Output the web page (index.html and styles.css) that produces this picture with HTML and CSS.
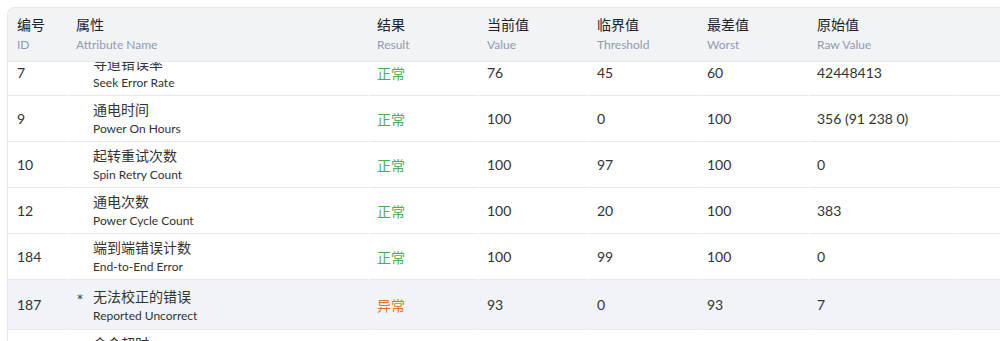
FILE: index.html
```html
<!DOCTYPE html>
<html lang="zh-CN">
<head>
<meta charset="utf-8">
<title>SMART</title>
<link rel="stylesheet" href="styles.css">
</head>
<body>
<div class="page">
  <div class="card">
    <div class="thead">
      <div class="row head-row">
        <div class="cell c-id"><div class="h-zh">编号</div><div class="h-en">ID</div></div>
        <div class="cell"><div class="h-zh">属性</div><div class="h-en">Attribute Name</div></div>
        <div class="cell"><div class="h-zh">结果</div><div class="h-en">Result</div></div>
        <div class="cell"><div class="h-zh">当前值</div><div class="h-en">Value</div></div>
        <div class="cell"><div class="h-zh">临界值</div><div class="h-en">Threshold</div></div>
        <div class="cell"><div class="h-zh">最差值</div><div class="h-en">Worst</div></div>
        <div class="cell"><div class="h-zh">原始值</div><div class="h-en">Raw Value</div></div>
        <div class="cell"></div>
      </div>
    </div>
    <div class="tbody-wrap">
      <div class="tbody">
        <div class="row body-row">
          <div class="cell c-id">7</div>
          <div class="cell attr"><span class="mark"></span><div class="names"><div class="zh">寻道错误率</div><div class="en">Seek Error Rate</div></div></div>
          <div class="cell ok">正常</div>
          <div class="cell">76</div><div class="cell">45</div><div class="cell">60</div><div class="cell">42448413</div><div class="cell"></div>
        </div>
        <div class="row body-row">
          <div class="cell c-id">9</div>
          <div class="cell attr"><span class="mark"></span><div class="names"><div class="zh">通电时间</div><div class="en">Power On Hours</div></div></div>
          <div class="cell ok">正常</div>
          <div class="cell">100</div><div class="cell">0</div><div class="cell">100</div><div class="cell">356 (91 238 0)</div><div class="cell"></div>
        </div>
        <div class="row body-row">
          <div class="cell c-id">10</div>
          <div class="cell attr"><span class="mark"></span><div class="names"><div class="zh">起转重试次数</div><div class="en">Spin Retry Count</div></div></div>
          <div class="cell ok">正常</div>
          <div class="cell">100</div><div class="cell">97</div><div class="cell">100</div><div class="cell">0</div><div class="cell"></div>
        </div>
        <div class="row body-row">
          <div class="cell c-id">12</div>
          <div class="cell attr"><span class="mark"></span><div class="names"><div class="zh">通电次数</div><div class="en">Power Cycle Count</div></div></div>
          <div class="cell ok">正常</div>
          <div class="cell">100</div><div class="cell">20</div><div class="cell">100</div><div class="cell">383</div><div class="cell"></div>
        </div>
        <div class="row body-row">
          <div class="cell c-id">184</div>
          <div class="cell attr"><span class="mark"></span><div class="names"><div class="zh">端到端错误计数</div><div class="en">End-to-End Error</div></div></div>
          <div class="cell ok">正常</div>
          <div class="cell">100</div><div class="cell">99</div><div class="cell">100</div><div class="cell">0</div><div class="cell"></div>
        </div>
        <div class="row body-row warn-row">
          <div class="cell c-id">187</div>
          <div class="cell attr"><span class="mark">*</span><div class="names"><div class="zh">无法校正的错误</div><div class="en">Reported Uncorrect</div></div></div>
          <div class="cell bad">异常</div>
          <div class="cell">93</div><div class="cell">0</div><div class="cell">93</div><div class="cell">7</div><div class="cell"></div>
        </div>
        <div class="row body-row">
          <div class="cell c-id">188</div>
          <div class="cell attr"><span class="mark"></span><div class="names"><div class="zh">命令超时</div><div class="en">Command Timeout</div></div></div>
          <div class="cell ok">正常</div>
          <div class="cell">100</div><div class="cell">0</div><div class="cell">100</div><div class="cell">0</div><div class="cell"></div>
        </div>
      </div>
    </div>
  </div>
</div>
</body>
</html>
```

FILE: styles.css
```css
html, body {
  margin: 0;
  padding: 0;
  background: #ffffff;
  overflow: hidden;
}
body {
  font-family: "Lato", "Noto Sans CJK SC", sans-serif;
  color: #333333;
  font-size: 14px;
}
.page {
  padding: 7px 0 0 7px;
  width: 1100px;
}
.card {
  border-top: 1px solid #e4e7ec;
  border-left: 1px solid #e4e7ec;
  border-radius: 8px 0 0 0;
  overflow: hidden;
  height: 400px;
  display: flex;
  flex-direction: column;
}
.row {
  display: grid;
  grid-template-columns: 59px 300px 109px 109px 109px 109px 148px 1fr;
  column-gap: 1px;
}
.thead {
  background: #f2f3f5;
  border-bottom: 1px solid #e4e7ec;
  position: relative;
  z-index: 1;
}
.head-row .cell {
  padding: 7px 0 7px 8px;
}
.head-row .c-id {
  padding-left: 9px;
}
.h-zh {
  font-size: 14px;
  line-height: 20px;
  color: #1d2129;
}
.h-en {
  font-size: 12px;
  line-height: 19px;
  color: #8d9bb3;
}
.tbody-wrap {
  overflow: hidden;
  flex: 1;
}
.tbody {
  margin-top: -12px;
}
.body-row .cell {
  border-bottom: 1px solid #e6e8ec;
  padding: 0 0 0 8px;
  display: flex;
  align-items: center;
  min-height: 45px;
}
.body-row .c-id {
  padding-left: 9px;
}
.attr .names {
  padding: 4px 0 2px;
}
.mark {
  width: 17px;
  flex: none;
  align-self: flex-start;
  padding: 10px 0 0 1px;
  box-sizing: border-box;
  color: #444;
  font-family: "DejaVu Sans", sans-serif;
  font-size: 12px;
  line-height: 19px;
}
.zh {
  font-size: 14px;
  line-height: 19px;
  color: #333;
}
.en {
  font-size: 12px;
  line-height: 20px;
  color: #333;
}
.ok {
  color: #4caf50;
}
.bad {
  color: #e8731c;
}
.warn-row {
  background: #f0f3f8;
}
.warn-row .attr .names {
  padding: 7px 0 3px;
}
```
